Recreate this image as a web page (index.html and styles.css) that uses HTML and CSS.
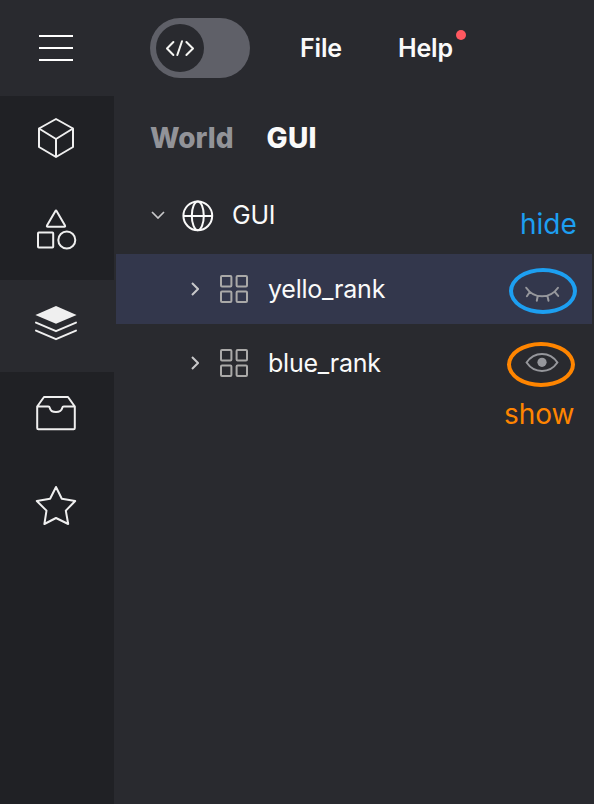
FILE: index.html
```html
<!DOCTYPE html>
<html lang="en">
<head>
<meta charset="utf-8">
<title>GUI</title>
<link rel="stylesheet" href="styles.css">
</head>
<body>
<div class="app">
  <header class="topbar">
    <div class="menu-button">
      <svg width="34" height="26" viewBox="0 0 34 26"><path d="M0 1H34M0 13H34M0 25H34" stroke="#fff" stroke-width="2"/></svg>
    </div>
    <div class="toggle"><div class="knob">
      <svg width="30" height="18" viewBox="0 0 30 18" fill="none" stroke="#f5f5f2" stroke-width="2" stroke-linecap="round" stroke-linejoin="round"><path d="M8.4 3L2 9.5L8.4 16M17 2.2L12.3 16M21.4 3L28 9.5L21.4 16"/></svg>
    </div></div>
    <nav class="menus"><span class="menu">File</span><span class="menu help">Help<i class="dot"></i></span></nav>
  </header>
  <div class="body">
    <aside class="sidebar">
      <div class="tool"><svg width="44" height="44" viewBox="0 0 44 44"><path d="M22 3L39 12.5V31L22 41L5 31V12.5ZM5 12.5L22 23L39 12.5M22 23V41"/></svg></div>
      <div class="tool"><svg width="44" height="44" viewBox="0 0 44 44"><path d="M21.3 3.2Q22 2 22.7 3.2L31 17.6Q31.5 18.8 30.3 18.8H13.7Q12.5 18.8 13 17.6Z"/><rect x="4" y="24.6" width="15.2" height="15" rx=".8"/><circle cx="32.8" cy="32" r="8.5"/></svg></div>
      <div class="tool selected"><svg width="44" height="44" viewBox="0 0 44 44"><path class="solid" d="M22 2L42.6 11L22 19.8L1.4 11Z"/><path d="M2 18.6L22 27.2L42 18.6M2 26.6L22 35.2L42 26.6"/></svg></div>
      <div class="tool"><svg width="44" height="44" viewBox="0 0 44 44"><path d="M3.2 14.5L10 5H34L40.8 14.5V36Q40.8 37.2 39.6 37.2H4.4Q3.2 37.2 3.2 36ZM3.2 14.6H14.2Q15.5 14.6 15.8 16C17 21.4 27 21.4 28.2 16Q28.5 14.6 29.8 14.6H40.8"/></svg></div>
      <div class="tool"><svg width="44" height="44" viewBox="0 0 44 44"><path d="M22 3L27.8 14.7L41.2 17L31.8 26.6L34.2 40L22 34L10.4 40L12.5 26.6L2.8 17L16.1 14.7Z"/></svg></div>
    </aside>
    <main class="panel">
      <div class="tabs"><span class="tab world">World</span><span class="tab active">GUI</span></div>
      <div class="tree">
        <div class="row root">
          <svg class="down" width="14" height="8" viewBox="0 0 14 8"><path d="M1 1L7 7L13 1"/></svg>
          <svg class="globe" width="32" height="32" viewBox="0 0 32 32"><circle cx="15.8" cy="15.8" r="14.4"/><ellipse cx="15.8" cy="15.8" rx="6" ry="14.4"/><path d="M1 16H30.5"/></svg>
          <span class="label root-label">GUI</span>
        </div>
        <div class="row current">
          <svg class="right" width="8" height="14" viewBox="0 0 8 14"><path d="M1 1L7 7L1 13"/></svg>
          <svg class="grid" width="28" height="28" viewBox="0 0 28 28"><rect x="1" y="1" width="10.4" height="10.4"/><rect x="16.6" y="1" width="10.4" height="10.4"/><rect x="1" y="16.6" width="10.4" height="10.4"/><rect x="16.6" y="16.6" width="10.4" height="10.4"/></svg>
          <span class="label">yello_rank</span>
          <div class="eye-wrap">
            <svg class="eye" width="36" height="20" viewBox="0 0 36 20"><path d="M2.2 8.7C10 20.2 26 20.2 34 8.7M5.6 13.3L2.9 17.2M13.7 17.2L12.8 21.8M23.5 17.2L24.5 21.8M30.8 12.9L34.2 16.9"/></svg>
            <span class="ring blue"></span>
            <span class="note hide">hide</span>
          </div>
        </div>
        <div class="row">
          <svg class="right" width="8" height="14" viewBox="0 0 8 14"><path d="M1 1L7 7L1 13"/></svg>
          <svg class="grid" width="28" height="28" viewBox="0 0 28 28"><rect x="1" y="1" width="10.4" height="10.4"/><rect x="16.6" y="1" width="10.4" height="10.4"/><rect x="1" y="16.6" width="10.4" height="10.4"/><rect x="16.6" y="16.6" width="10.4" height="10.4"/></svg>
          <span class="label">blue_rank</span>
          <div class="eye-wrap">
            <svg class="eye" width="36" height="20" viewBox="0 0 36 20"><path d="M2.6 9.5C10.3-1.8 25.7-1.8 33.4 9.5C25.7 20.8 10.3 20.8 2.6 9.5Z"/><circle class="pupil" cx="18" cy="9.3" r="4.6"/></svg>
            <span class="ring orange"></span>
            <span class="note show">show</span>
          </div>
        </div>
      </div>
    </main>
  </div>
</div>
</body>
</html>
```
FILE: styles.css
```css
* { box-sizing: border-box; }
body { margin: 0; background: #292a2f; color: #fafafa; font-family: Inter, "Liberation Sans", sans-serif; }
svg { display: block; flex: none; }
.app { width: 594px; height: 804px; display: flex; flex-direction: column; overflow: hidden; }
.topbar { height: 96px; display: flex; align-items: center; }
.menu-button { width: 150px; padding-left: 39px; }
.toggle { width: 100px; height: 60px; border-radius: 30px; background: #5f6068; padding: 6px; }
.knob { width: 48px; height: 48px; border-radius: 50%; background: #292a2f; padding: 15px 9px; }
.menus { display: flex; padding-left: 50px; gap: 56px; font-size: 25px; font-weight: 600; line-height: 32px; letter-spacing: -0.15px; }
.menu { white-space: nowrap; }
.help { position: relative; }
.dot { position: absolute; right: -13px; top: -2px; width: 10px; height: 10px; border-radius: 50%; background: #ff5860; }
.body { flex: 1; display: flex; }
.sidebar { width: 114px; background: #202125; }
.tool { height: 92px; padding: 20px 0 0 34px; }
.tool svg { fill: none; stroke: #efefef; stroke-width: 2; stroke-linejoin: round; stroke-linecap: round; }
.tool.selected { background: #292a2f; padding-top: 24px; }
.tool .solid { fill: #efefef; stroke: none; }
.panel { flex: 1; padding: 0 2px; }
.tabs { height: 84px; display: flex; align-items: center; gap: 33px; padding-left: 34px; font-size: 28px; font-weight: 800; }
.active { letter-spacing: 0.3px; }
.world { color: #929398; }
.tree { display: flex; flex-direction: column; gap: 4px; }
.row { height: 70px; display: flex; align-items: center; padding: 0 32px 0 75px; }
.root { padding-left: 35px; }
.current { background: #33374c; }
.label { font-size: 25px; line-height: 32px; letter-spacing: -0.23px; white-space: nowrap; }
.down, .right, .globe, .grid { fill: none; stroke-width: 2; }
.down, .right { stroke: #c8c8ca; }
.down { stroke-width: 1.7; }
.globe { stroke: #fafafa; margin: 2px 18px 0 17px; }
.grid { stroke: #aaa9a8; margin: 0 20px 0 21px; }
.grid rect { rx: 1px; }
.eye-wrap { position: relative; margin-left: auto; }
.eye { fill: none; stroke: #96979c; stroke-width: 2; stroke-linecap: round; overflow: visible; }
.eye .pupil { fill: #96979c; stroke: none; }
.ring { position: absolute; width: 68px; height: 46px; border: 4px solid; border-radius: 50%; }
.blue { color: #1d9ff1; left: -15.5px; top: -10.6px; }
.orange { color: #ff8500; left: -17.5px; top: -11px; height: 45px; }
.note { position: absolute; font-size: 28px; line-height: 34px; white-space: nowrap; }
.hide { color: #1d9ff1; left: -4px; top: -72px; }
.show { color: #ff8500; left: -20px; top: 44px; }
```
